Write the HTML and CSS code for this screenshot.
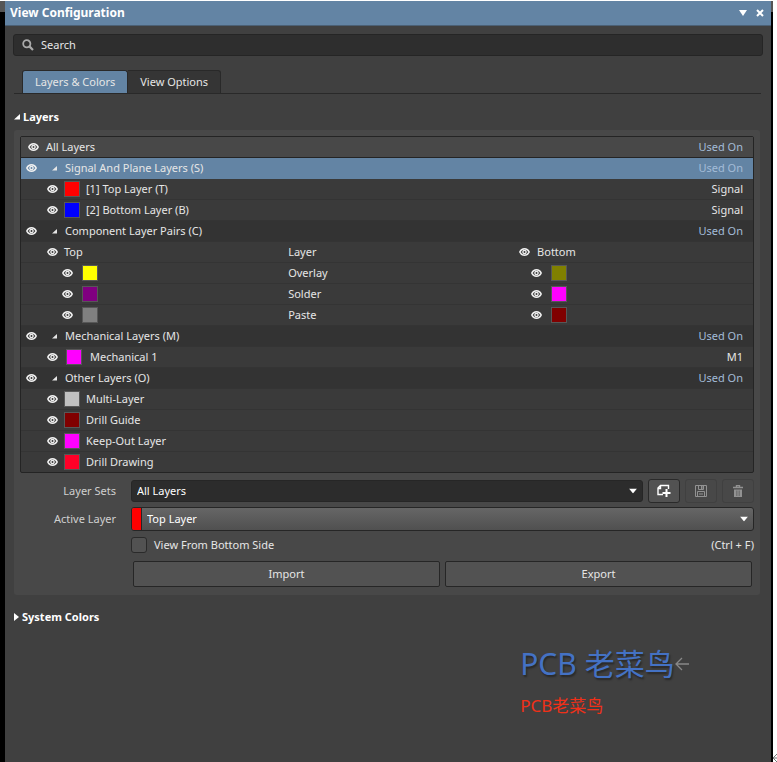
FILE: index.html
```html
<!DOCTYPE html>
<html lang="en">

<head>
  <meta charset="UTF-8" />
  <meta name="viewport" content="width=device-width, initial-scale=1.0" />
  <title>View Configuration</title>
  <link rel="stylesheet" href="styles.css">
</head>

<body>
  <!-- Shared icons -->
  <svg class="sprite" aria-hidden="true">
    <symbol id="eye" viewBox="0 0 12 10">
      <path d="M0.9 5 C3 0.2 9 0.2 11.1 5 C9 9.8 3 9.8 0.9 5 Z" fill="none" stroke="currentColor" stroke-width="1.7" />
      <circle cx="6" cy="5" r="1.8" fill="none" stroke="currentColor" stroke-width="1.5" />
    </symbol>
    <symbol id="open" viewBox="0 0 6 6">
      <path d="M6 0 V5.5 H0 Z" fill="currentColor" />
    </symbol>
    <symbol id="down" viewBox="0 0 8 5">
      <path d="M0 0 H8 L4 5 Z" fill="currentColor" />
    </symbol>
  </svg>

  <div class="frame">
    <div class="panel">
      <header class="titlebar">
        <h1>View Configuration</h1>
        <button class="icon-btn" aria-label="Panel menu"><svg width="8" height="6" viewBox="0 0 8 6"><path d="M0 0 H8 L4 6 Z" fill="#fff" /></svg></button>
        <button class="icon-btn" aria-label="Close"><svg width="8" height="8" viewBox="0 0 8 8"><path d="M1 1 L7 7 M7 1 L1 7" stroke="#fff" stroke-width="2" /></svg></button>
      </header>

      <div class="search">
        <svg width="12" height="12" viewBox="0 0 12 12"><circle cx="4.8" cy="4.8" r="3.6" fill="none" stroke="#aaa" stroke-width="1.8" /><path d="M7.4 7.4 L11 11" stroke="#aaa" stroke-width="2.2" /></svg>
        <input type="text" placeholder="Search" aria-label="Search">
      </div>

      <nav class="tabs">
        <button class="tab active">Layers &amp; Colors</button>
        <button class="tab">View Options</button>
      </nav>

      <h2 class="section"><svg width="6" height="6"><use href="#open" /></svg>Layers</h2>

      <section class="group">
        <table class="layers">
          <colgroup>
            <col class="col-name">
            <col class="col-layer">
            <col>
          </colgroup>
          <thead>
            <tr>
              <th colspan="2"><div class="cell all"><button class="icon-btn" aria-label="Toggle all layers"><svg width="11" height="10"><use href="#eye" /></svg></button>All Layers</div></th>
              <th class="right"><a href="#">Used On</a></th>
            </tr>
          </thead>
          <tbody>
            <tr class="head selected">
              <td colspan="2"><div class="cell"><button class="icon-btn" aria-label="Toggle signal layers"><svg width="11" height="10"><use href="#eye" /></svg></button><svg class="tri" width="5" height="5"><use href="#open" /></svg>Signal And Plane Layers (S)</div></td>
              <td class="right"><a href="#">Used On</a></td>
            </tr>
            <tr>
              <td colspan="2"><div class="cell sub"><button class="icon-btn" aria-label="Toggle top layer"><svg width="11" height="10"><use href="#eye" /></svg></button><span class="swatch red"></span>[1] Top Layer (T)</div></td>
              <td class="right">Signal</td>
            </tr>
            <tr>
              <td colspan="2"><div class="cell sub"><button class="icon-btn" aria-label="Toggle bottom layer"><svg width="11" height="10"><use href="#eye" /></svg></button><span class="swatch blue"></span>[2] Bottom Layer (B)</div></td>
              <td class="right">Signal</td>
            </tr>
            <tr class="head">
              <td colspan="2"><div class="cell"><button class="icon-btn" aria-label="Toggle component layers"><svg width="11" height="10"><use href="#eye" /></svg></button><svg class="tri" width="5" height="5"><use href="#open" /></svg>Component Layer Pairs (C)</div></td>
              <td class="right"><a href="#">Used On</a></td>
            </tr>
            <tr>
              <td><div class="cell sub"><button class="icon-btn" aria-label="Toggle top side"><svg width="11" height="10"><use href="#eye" /></svg></button>Top</div></td>
              <td>Layer</td>
              <td><div class="cell side"><button class="icon-btn" aria-label="Toggle bottom side"><svg width="11" height="10"><use href="#eye" /></svg></button>Bottom</div></td>
            </tr>
            <tr>
              <td><div class="cell pair"><button class="icon-btn" aria-label="Toggle top overlay"><svg width="11" height="10"><use href="#eye" /></svg></button><span class="swatch yellow"></span></div></td>
              <td>Overlay</td>
              <td><div class="cell side pair"><button class="icon-btn" aria-label="Toggle bottom overlay"><svg width="11" height="10"><use href="#eye" /></svg></button><span class="swatch olive"></span></div></td>
            </tr>
            <tr>
              <td><div class="cell pair"><button class="icon-btn" aria-label="Toggle top solder"><svg width="11" height="10"><use href="#eye" /></svg></button><span class="swatch purple"></span></div></td>
              <td>Solder</td>
              <td><div class="cell side pair"><button class="icon-btn" aria-label="Toggle bottom solder"><svg width="11" height="10"><use href="#eye" /></svg></button><span class="swatch magenta"></span></div></td>
            </tr>
            <tr>
              <td><div class="cell pair"><button class="icon-btn" aria-label="Toggle top paste"><svg width="11" height="10"><use href="#eye" /></svg></button><span class="swatch gray"></span></div></td>
              <td>Paste</td>
              <td><div class="cell side pair"><button class="icon-btn" aria-label="Toggle bottom paste"><svg width="11" height="10"><use href="#eye" /></svg></button><span class="swatch maroon"></span></div></td>
            </tr>
            <tr class="head">
              <td colspan="2"><div class="cell"><button class="icon-btn" aria-label="Toggle mechanical layers"><svg width="11" height="10"><use href="#eye" /></svg></button><svg class="tri" width="5" height="5"><use href="#open" /></svg>Mechanical Layers (M)</div></td>
              <td class="right"><a href="#">Used On</a></td>
            </tr>
            <tr>
              <td colspan="2"><div class="cell sub mech"><button class="icon-btn" aria-label="Toggle mechanical 1"><svg width="11" height="10"><use href="#eye" /></svg></button><span class="swatch magenta"></span>Mechanical 1</div></td>
              <td class="right">M1</td>
            </tr>
            <tr class="head">
              <td colspan="2"><div class="cell"><button class="icon-btn" aria-label="Toggle other layers"><svg width="11" height="10"><use href="#eye" /></svg></button><svg class="tri" width="5" height="5"><use href="#open" /></svg>Other Layers (O)</div></td>
              <td class="right"><a href="#">Used On</a></td>
            </tr>
            <tr>
              <td colspan="3"><div class="cell sub"><button class="icon-btn" aria-label="Toggle multi-layer"><svg width="11" height="10"><use href="#eye" /></svg></button><span class="swatch silver"></span>Multi-Layer</div></td>
            </tr>
            <tr>
              <td colspan="3"><div class="cell sub"><button class="icon-btn" aria-label="Toggle drill guide"><svg width="11" height="10"><use href="#eye" /></svg></button><span class="swatch maroon"></span>Drill Guide</div></td>
            </tr>
            <tr>
              <td colspan="3"><div class="cell sub"><button class="icon-btn" aria-label="Toggle keep-out layer"><svg width="11" height="10"><use href="#eye" /></svg></button><span class="swatch magenta"></span>Keep-Out Layer</div></td>
            </tr>
            <tr>
              <td colspan="3"><div class="cell sub"><button class="icon-btn" aria-label="Toggle drill drawing"><svg width="11" height="10"><use href="#eye" /></svg></button><span class="swatch crimson"></span>Drill Drawing</div></td>
            </tr>
          </tbody>
        </table>

        <div class="form">
          <label for="sets">Layer Sets</label>
          <div class="row">
            <div class="select dark">
              <select id="sets">
                <option>All Layers</option>
              </select>
              <svg class="arrow" width="8" height="5"><use href="#down" /></svg>
            </div>
            <button class="tool" aria-label="New layer set">
              <svg width="16" height="14" viewBox="0 0 16 14"><path d="M7 10.5 H2 V4 L4.5 1.5 H12.5 V5 M2 4.5 H4.5 V1.5" fill="none" stroke="#fff" stroke-width="1.4" /><path d="M10.5 5 V13 M6.5 9 H14.5" stroke="#fff" stroke-width="2" /></svg>
            </button>
            <button class="tool" aria-label="Save layer set" disabled>
              <svg width="12" height="12" viewBox="0 0 12 12"><path d="M0.5 0.5 H11.5 V11.5 H0.5 Z M3.5 0.5 V4.5 H8.5 V0.5 M2.5 11.5 V6.5 H9.5 V11.5 M4 9 H8" fill="none" stroke="#929292" /><path d="M6 1 H7.5 V4 H6 Z" fill="#929292" /></svg>
            </button>
            <button class="tool" aria-label="Delete layer set" disabled>
              <svg width="10" height="13" viewBox="0 0 10 13"><path d="M0 2.5 H10 M3.5 2 V0.5 H6.5 V2" fill="none" stroke="#929292" stroke-width="1.4" /><path d="M1 4.5 H9 V12 H1 Z" fill="#929292" /><path d="M3.5 5.5 V11 M5 5.5 V11 M6.5 5.5 V11" stroke="#666" stroke-width="0.7" /></svg>
            </button>
          </div>

          <label for="active">Active Layer</label>
          <div class="select light">
            <span class="chip"></span>
            <select id="active">
              <option>Top Layer</option>
            </select>
            <svg class="arrow" width="8" height="5"><use href="#down" /></svg>
          </div>

          <div class="check">
            <input type="checkbox" id="bottom-side">
            <label for="bottom-side">View From Bottom Side</label>
            <span>(Ctrl + F)</span>
          </div>

          <div class="actions">
            <button>Import</button>
            <button>Export</button>
          </div>
        </div>
      </section>

      <h2 class="section closed"><svg width="5" height="8" viewBox="0 0 5 8"><path d="M0 0 L5 4 L0 8 Z" fill="currentColor" /></svg>System Colors</h2>

      <div class="signature" lang="zh-CN">
        <p class="big">PCB 老菜鸟<svg width="14" height="14" viewBox="0 0 14 14"><path d="M14 7 H1 M7 1 L1 7 L7 13" fill="none" stroke="#888" stroke-width="1.3" /></svg></p>
        <p class="small">PCB老菜鸟</p>
      </div>
    </div>
  </div>
  <div class="margin">
    <svg width="4" height="8" viewBox="0 0 4 8"><path d="M4 0 L0 4 L4 8 M0 4 H4" fill="none" stroke="#777" /></svg>
  </div>
</body>

</html>
```

FILE: styles.css
```css
* {
  box-sizing: border-box;
}

body {
  margin: 0;
  display: flex;
  min-height: 100vh;
  background-color: #fff;
  color: #e6e6e6;
  font-family: "Noto Sans", "Noto Sans CJK SC", sans-serif;
  font-size: 11px;
  line-height: 16px;
}

button,
input,
select {
  font: inherit;
  color: inherit;
}

svg {
  flex: none;
}

.sprite {
  position: absolute;
  width: 0;
  height: 0;
}

/* Dark desktop edge showing either side of the panel */
.frame {
  flex: 1;
  display: flex;
  margin-top: 1px;
  padding: 0 2px 0 5px;
  background: linear-gradient(#555 11px, #000 11px);
}

.margin {
  width: 4px;
  display: flex;
  align-items: flex-end;
}

.panel {
  flex: 1;
  background-color: #404040;
}

/* Title bar */
.titlebar {
  display: flex;
  align-items: center;
  gap: 9px;
  height: 25px;
  padding: 0 7px 0 5px;
  background-color: #6384a4;
  border-bottom: 1px solid #4b6075;
}

h1 {
  flex: 1;
  margin: 0;
  font-size: 12px;
  font-weight: bold;
  color: #fff;
}

.icon-btn {
  display: flex;
  flex: none;
  padding: 0;
  border: 0;
  background: none;
  color: #f0f0f0;
}

/* Search box */
.search {
  display: flex;
  align-items: center;
  gap: 7px;
  height: 22px;
  margin: 8px 8px 0;
  padding: 0 8px;
  background-color: #2e2e2e;
  border: 1px solid #252525;
  border-radius: 3px;
}

.search input {
  flex: 1;
  padding: 0;
  border: 0;
  outline: none;
  background: none;
}

.search input::placeholder {
  color: #e6e6e6;
}

/* Tabs */
.tabs {
  display: flex;
  margin: 14px 10px 0 9px;
  padding-left: 8px;
  border-bottom: 1px solid #292929;
}

.tab {
  height: 23px;
  padding: 0 12px;
  border: 1px solid #292929;
  border-bottom: 0;
  border-left: 0;
  border-radius: 0 3px 0 0;
  background-color: #353535;
}

.tab.active {
  border-left: 1px solid #292929;
  border-radius: 3px 3px 0 0;
  background-color: #6384a4;
}

/* Section headings */
.section {
  display: flex;
  align-items: center;
  gap: 3px;
  margin: 15px 9px 5px;
  font-size: 11px;
  line-height: 16px;
  color: #fff;
}

.section.closed {
  margin-top: 14px;
}

.group {
  margin: 0 11px 0 9px;
  padding: 6px 6px 8px 6px;
  background-color: #484848;
  border-radius: 3px;
}

/* Layer list */
.layers {
  width: 100%;
  table-layout: fixed;
  border-collapse: separate;
  border-spacing: 0;
  border: 1px solid #242424;
  border-radius: 2px;
  background-color: #3a3a3a;
}

.col-name {
  width: 36.5%;
}

.col-layer {
  width: 31%;
}

.layers th,
.layers td {
  height: 21px;
  padding: 0;
  border-bottom: 1px solid #343434;
  font-weight: normal;
  text-align: left;
  line-height: 16px;
}

.layers th {
  background-color: #484848;
  border-bottom-color: #242424;
}

.layers tr:last-child td {
  height: 20px;
  border-bottom: 0;
}

.layers .head td {
  background-color: #333;
}

.layers .selected td {
  background-color: #6384a4;
  border-bottom-color: #6384a4;
}

.layers .right {
  padding-right: 10px;
  text-align: right;
}

.layers a {
  color: #a3bcd8;
  text-decoration: none;
}

.cell {
  display: flex;
  align-items: center;
  height: 20px;
  padding-left: 5px;
}

.cell .tri {
  margin: 0 8px 0 15px;
}

.cell.all {
  gap: 7px;
  padding-left: 7px;
}

.cell.sub {
  gap: 6px;
  padding-left: 26px;
}

.cell.mech {
  gap: 8px;
}

.cell.pair {
  gap: 9px;
  padding-left: 41px;
}

.cell.side {
  gap: 7px;
  padding-left: 4px;
}

.cell.side.pair {
  gap: 9px;
  padding-left: 16px;
}

.swatch {
  width: 16px;
  height: 16px;
  border: 1px solid #575757;
}

.red { background-color: #f00; }
.blue { background-color: #00f; }
.yellow { background-color: #ff0; }
.olive { background-color: #808000; }
.purple { background-color: #800080; }
.magenta { background-color: #f0f; }
.gray { background-color: #808080; }
.maroon { background-color: #800000; }
.silver { background-color: #c0c0c0; }
.crimson { background-color: #ff0028; }

/* Fields under the list */
.form {
  display: grid;
  grid-template-columns: 96px 1fr;
  align-items: center;
  column-gap: 15px;
  row-gap: 4px;
  margin-top: 6px;
}

.form > label {
  text-align: right;
  color: #d0d0d0;
}

.row {
  display: flex;
  align-items: center;
  gap: 5px;
}

.select {
  position: relative;
  display: flex;
  flex: 1;
  height: 24px;
  border: 1px solid #262626;
  border-radius: 3px;
  overflow: hidden;
}

.select select {
  flex: 1;
  appearance: none;
  padding: 0 5px;
  border: 0;
  outline: none;
  background: none;
  color: #fff;
}

.select option {
  background-color: #2e2e2e;
}

.dark {
  height: 22px;
  background-color: #2c2c2c;
}

.light {
  background: linear-gradient(#666, #505050);
}

.arrow {
  position: absolute;
  top: 50%;
  right: 5px;
  transform: translateY(-50%);
  color: #fff;
  pointer-events: none;
}

.chip {
  width: 10px;
  background-color: #f00;
  border-right: 1px solid #262626;
}

.tool {
  display: flex;
  align-items: center;
  justify-content: center;
  width: 32px;
  height: 24px;
  padding: 0;
  border: 1px solid #2a2a2a;
  border-radius: 3px;
  background-color: #525252;
}

.tool:disabled {
  border-color: #404040;
  background-color: #484848;
}

.check {
  grid-column: 2;
  display: flex;
  align-items: center;
  gap: 7px;
  height: 20px;
}

.check input {
  appearance: none;
  width: 16px;
  height: 16px;
  margin: 0;
  border: 1px solid #2a2a2a;
  border-radius: 3px;
  background-color: #525252;
}

.check input:checked {
  background-color: #6384a4;
}

.check label {
  flex: 1;
}

.actions {
  grid-column: 2;
  display: grid;
  grid-template-columns: 1fr 1fr;
  gap: 5px;
  padding: 2px 2px 0;
}

.actions button {
  height: 26px;
  border: 1px solid #262626;
  border-radius: 2px;
  background-color: #525252;
}

/* Author signature */
.signature {
  margin: 15px 0 0 67%;
  padding-left: 2px;
}

.signature p {
  margin: 0;
}

.signature .big {
  display: flex;
  align-items: center;
  font-size: 30px;
  line-height: 48px;
  color: #4472c4;
  text-shadow: 1px 2px 2px rgba(0, 0, 0, 0.4);
}

.signature .small {
  margin-top: 6px;
  font-size: 17px;
  line-height: 24px;
  color: #f03018;
}
```
